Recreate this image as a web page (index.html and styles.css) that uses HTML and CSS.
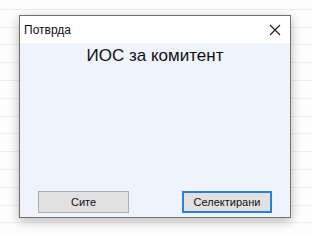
FILE: index.html
```html
<!DOCTYPE html>
<html>
<head>
<meta charset="utf-8">
<link rel="stylesheet" href="styles.css">
</head>
<body>
<div class="page">
  <div class="dialog">
    <div class="titlebar">
      <span class="title">Потврда</span>
      <svg class="close" width="12" height="12" viewBox="0 0 12 12"><path d="M1 1 L11 11 M11 1 L1 11" stroke="#1a1a1a" stroke-width="1.1" fill="none"/></svg>
    </div>
    <div class="client">
      <div class="label">ИОС за комитент</div>
      <div class="buttons">
        <button class="btn">Сите</button>
        <button class="btn btn-default">Селектирани</button>
      </div>
    </div>
  </div>
</div>
</body>
</html>
```

FILE: styles.css
```css
html, body {
  margin: 0;
  padding: 0;
}
body {
  width: 312px;
  height: 235px;
  overflow: hidden;
  font-family: "Liberation Sans", Arial, sans-serif;
}
.page {
  width: 312px;
  height: 235px;
  box-sizing: border-box;
  padding: 15px 0 0 19px;
  background-color: #fdfdfd;
  background-image: repeating-linear-gradient(to bottom, transparent 0, transparent 8.8px, #eeeeee 8.8px, #eeeeee 9.8px, transparent 9.8px, transparent 17.8px);
}
.dialog {
  width: 272px;
  height: 203px;
  box-sizing: border-box;
  border: 1px solid #6f6f6f;
  box-shadow: 0 3px 10px rgba(0, 0, 0, 0.28);
  display: flex;
  flex-direction: column;
  background: #fff;
}
.titlebar {
  height: 27px;
  flex: none;
  background: #fff;
  display: flex;
  align-items: center;
  justify-content: space-between;
  padding: 0 9px 0 4px;
}
.title {
  font-size: 12px;
  color: #111;
  margin-top: 1px;
}
.close {
  display: block;
  margin-top: 1px;
}
.client {
  flex: 1;
  background: #eff3fc;
  display: flex;
  flex-direction: column;
  justify-content: space-between;
  padding: 4px 18px 4px 18px;
}
.label {
  text-align: center;
  font-size: 17px;
  line-height: 18px;
  color: #111;
}
.buttons {
  display: flex;
  justify-content: space-between;
  align-items: flex-end;
}
.btn {
  font-family: "Liberation Sans", Arial, sans-serif;
  font-size: 11px;
  color: #111;
  background: #e1e1e1;
  border: 1px solid #adadad;
  width: 91px;
  height: 22px;
  padding: 0;
  margin: 0;
  box-sizing: border-box;
}
.btn-default {
  width: 90px;
  border: 2px solid #2b7fd4;
}
```
